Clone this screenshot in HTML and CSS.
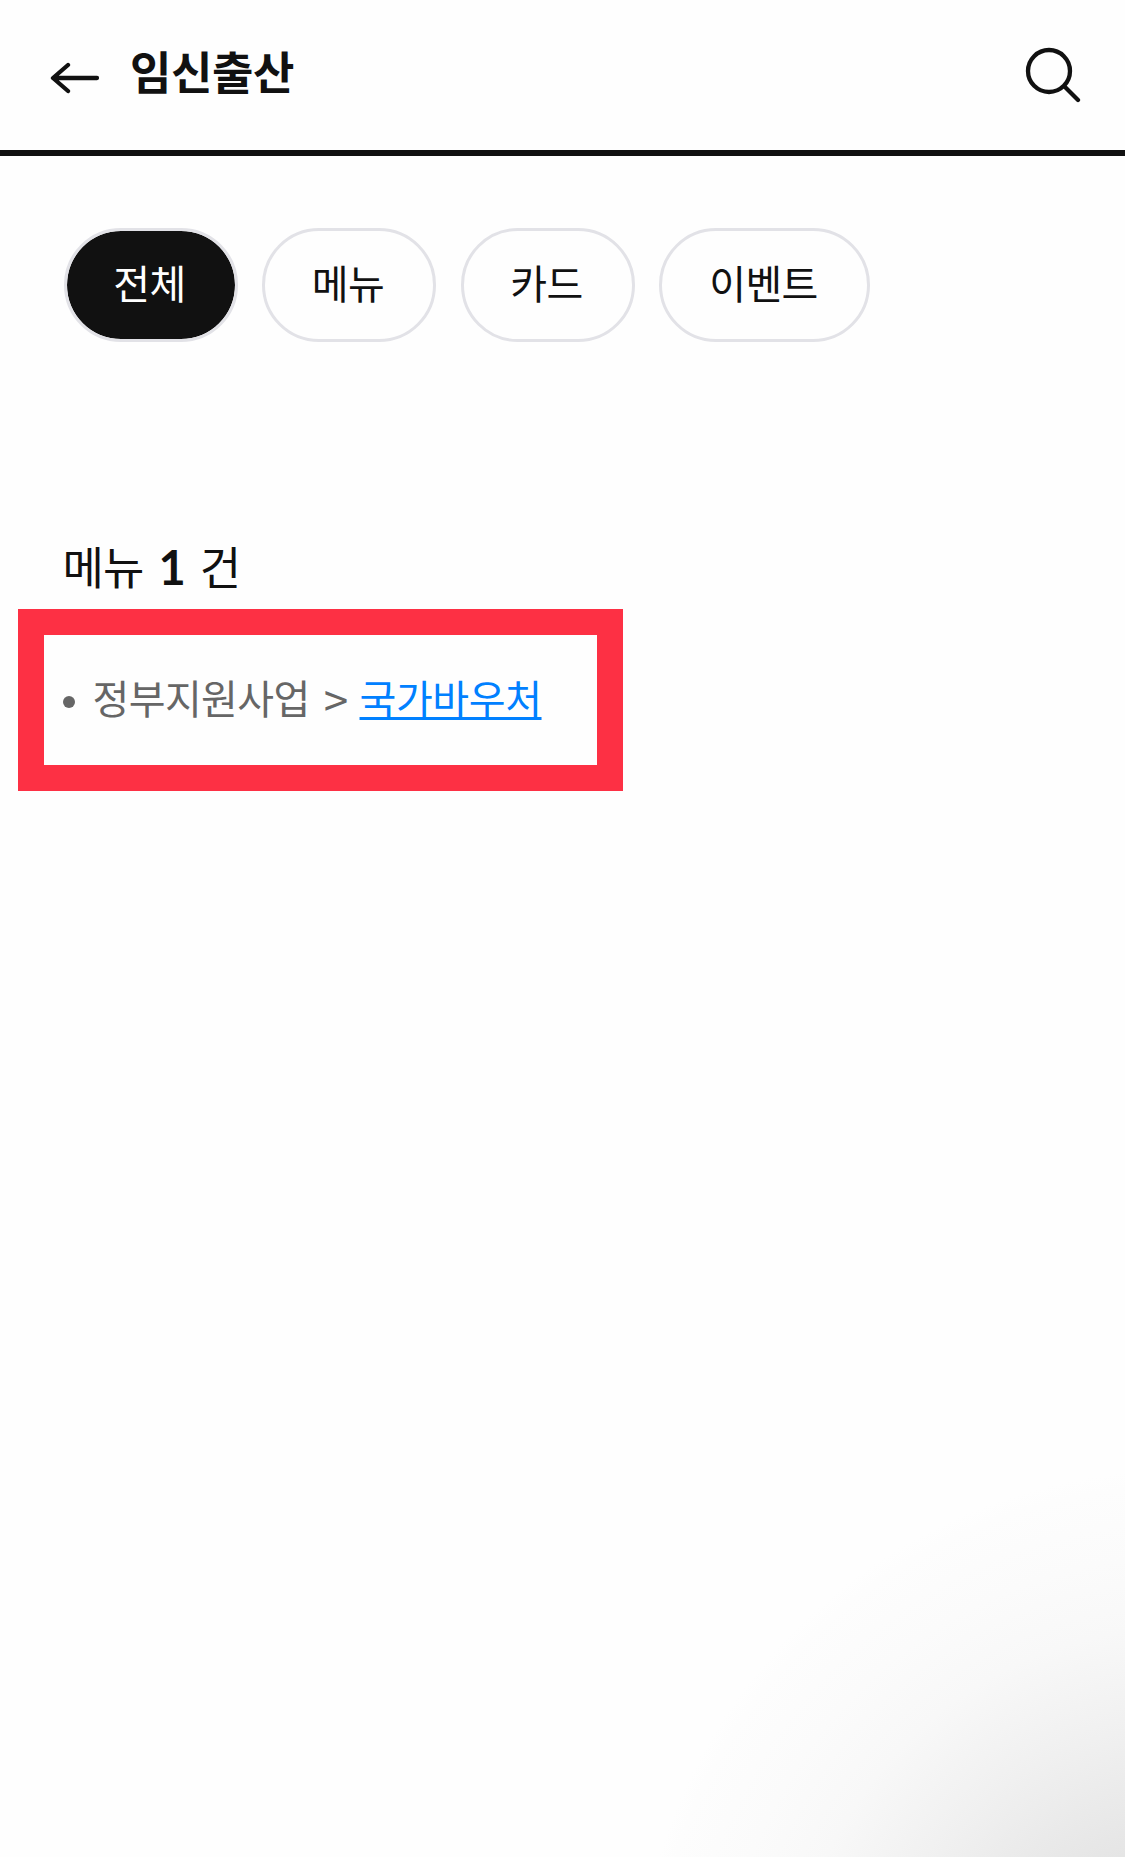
FILE: index.html
```html
<!DOCTYPE html>
<html lang="ko">
<head>
  <meta charset="UTF-8" />
  <meta name="viewport" content="width=device-width, initial-scale=1.0"/>
  <title>임신출산</title>
  <link rel="stylesheet" href="styles.css">
</head>
<body>
  <!-- Header -->
  <header class="header">
    <a class="back" aria-label="뒤로">
      <svg width="50" height="34" viewBox="0 0 50 34">
        <path d="M18 4 L3 17 L18 30 M4 17 H47" />
      </svg>
    </a>
    <h1 class="title">임신출산</h1>
    <a class="search" aria-label="검색">
      <svg width="56" height="56" viewBox="0 0 56 56">
        <circle cx="24" cy="24" r="21" />
        <path d="M39.5 39.5 L53 53" />
      </svg>
    </a>
  </header>

  <main class="content">
    <!-- Filter tabs -->
    <nav class="tabs">
      <button class="tab active">전체</button>
      <button class="tab">메뉴</button>
      <button class="tab">카드</button>
      <button class="tab wide">이벤트</button>
    </nav>

    <!-- Results -->
    <h2 class="count">메뉴 <strong>1</strong> 건</h2>
    <ul class="result">
      <li><span class="path">정부지원사업</span><span class="arrow">&gt;</span><a class="link">국가바우처</a></li>
    </ul>
  </main>
</body>
</html>
```
FILE: styles.css
```css
* {
  box-sizing: border-box;
  margin: 0;
  padding: 0;
}

body {
  min-height: 1857px;
  background: radial-gradient(circle 545px at 1180px 2015px, #dcdcdc 0%, #e4e4e4 29%, #f0f0f0 53%, #f8f8f8 71%, #fbfbfb 84%, #fdfdfd 97%, #fefefe 100%) #fefefe;
  font-family: 'Noto Sans CJK KR', sans-serif;
  color: #111;
}

.header {
  display: flex;
  align-items: flex-start;
  height: 156px;
  padding: 0 44.5px 0 50px;
  border-bottom: 6px solid #111;
}

.header svg {
  display: block;
  fill: none;
  stroke: #111;
  stroke-width: 4.3;
  stroke-linecap: round;
  stroke-linejoin: round;
}

.back {
  margin-top: 61px;
}

.title {
  margin: 38.5px 0 0 30px;
  font-size: 45px;
  line-height: 64px;
  font-weight: 700;
  letter-spacing: -0.4px;
}

.search {
  margin: 47px 0 0 auto;
}

.content {
  padding: 72px 17.5px 0;
}

.tabs {
  display: flex;
  gap: 24.5px;
  margin-left: 46px;
}

.tab {
  width: 174px;
  height: 114px;
  padding: 0 2px 6px 0;
  border: 3px solid #e2e2e7;
  border-radius: 57px;
  background: transparent;
  color: #111;
  font-family: inherit;
  font-size: 40px;
  letter-spacing: -0.6px;
}

.tab.wide {
  width: 211px;
}

.tab.active {
  background: #111;
  background-clip: padding-box;
  color: #fff;
}

.count {
  margin: 192px 0 0 45px;
  font-size: 45px;
  line-height: 64px;
  font-weight: 400;
  letter-spacing: -0.8px;
  word-spacing: 3px;
}

.count strong {
  font-family: 'Lato', sans-serif;
  font-size: 47px;
  line-height: 1;
  font-weight: 700;
}

.result {
  display: flex;
  align-items: center;
  width: 605px;
  height: 182px;
  margin-top: 11px;
  border: 26px solid #fd3044;
  background: #fefefe;
  list-style: none;
}

.result li {
  display: flex;
  align-items: center;
  padding: 0 0 7px 19px;
  color: #666;
  font-size: 40px;
  line-height: 50px;
  letter-spacing: -0.6px;
}

.result li::before {
  content: '';
  width: 12px;
  height: 12px;
  margin: 10px 18px 0 0;
  border-radius: 50%;
  background: #666;
}

.arrow {
  margin: 3px 12px 0 14px;
  font-size: 44px;
}

.link {
  color: #0080ff;
  letter-spacing: -0.4px;
  text-decoration: underline;
  text-decoration-thickness: 3px;
  text-decoration-skip-ink: none;
  text-underline-offset: 3px;
}
```
